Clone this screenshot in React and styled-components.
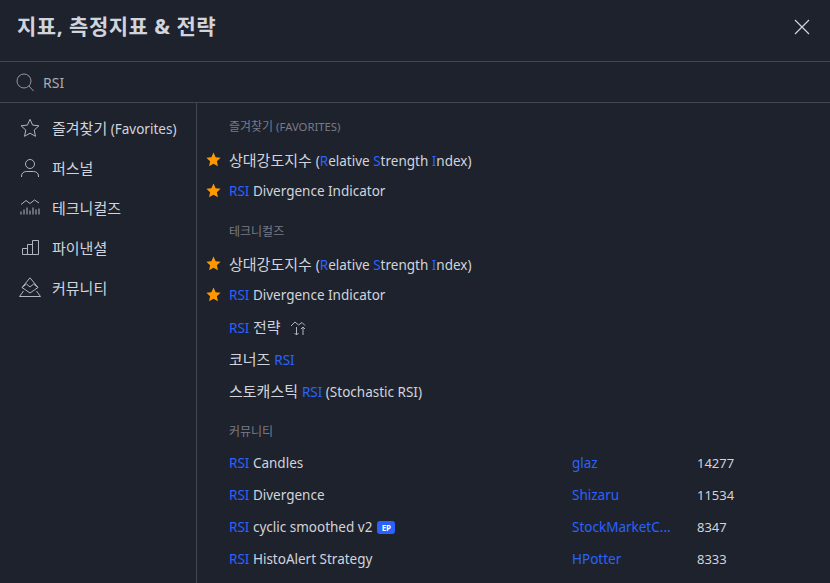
import React from 'react';
import styled, {createGlobalStyle} from 'styled-components';

const GlobalStyle = createGlobalStyle`
  html, body, #root { margin: 0; height: 100%; }
  body {
    background: #1e222d;
    overflow: hidden;
    font-family: "Noto Sans", "Noto Sans CJK KR", sans-serif;
  }
`;

const Dialog = styled.div`
  width: 830px;
  height: 583px;
  display: flex;
  flex-direction: column;
  background: #1e222d;
  color: #d1d4dc;
  overflow: hidden;
`;
const Header = styled.div`
  height: 48px;
  flex: none;
  display: flex;
  align-items: flex-start;
  justify-content: space-between;
  padding: 13px 19px 0 17px;
  border-bottom: 1px solid #434651;
`;
const Title = styled.div`
  font-size: 21px;
  line-height: 26px;
  font-weight: 700;
  letter-spacing: 0.5px;
  color: #d1d4dc;
`;
const CloseButton = styled.button`
  border: 0;
  padding: 0;
  margin-top: 5px;
  background: none;
  display: flex;
  color: #d1d4dc;
`;
const SearchBar = styled.div`
  height: 40px;
  flex: none;
  display: flex;
  align-items: center;
  gap: 9px;
  padding-left: 16px;
  border-bottom: 1px solid #434651;
  color: #9598a1;
`;
const SearchText = styled.span`
  font-size: 14px;
  color: #a8abb3;
`;
const Body = styled.div`
  flex: 1;
  display: flex;
  min-height: 0;
`;
const Sidebar = styled.div`
  width: 196px;
  flex: none;
  border-right: 1px solid #434651;
  padding-top: 5px;
`;
const NavItem = styled.div`
  height: 39.8px;
  display: flex;
  align-items: center;
  padding-left: 19px;
  gap: 11px;
  font-size: 13.5px;
  color: #d1d4dc;
`;
const NavIcon = styled.span`
  width: 22px;
  height: 22px;
  display: flex;
  align-items: center;
  justify-content: center;
  color: #b2b5be;
`;
const NavLabel = styled.span`
  white-space: pre;
`;
const Main = styled.div`
  flex: 1;
  min-width: 0;
  padding-top: 16px;
`;
const SectionTitle = styled.div`
  height: 16px;
  line-height: 16px;
  margin: ${p => p.$top || 0}px 0 ${p => p.$bottom || 9}px 32px;
  font-size: 11.3px;
  color: #787b86;
`;
const SectionKo = styled.span`
  font-size: 12px;
`;
const Row = styled.div`
  height: ${p => p.$tall ? 32 : 31}px;
  display: grid;
  grid-template-columns: 32px 343px 125px 1fr;
  align-items: center;
  font-size: 13.5px;
  color: #d1d4dc;
`;
const StarCell = styled.span`
  display: flex;
  padding-left: 9px;
`;
const Name = styled.span`
  white-space: pre;
`;
// Hangul runs wider than the Latin around it in the reference
const Ko = styled.span`
  font-size: 15px;
`;
const Hit = styled.span`
  color: #2962ff;
`;
const Author = styled.span`
  color: #2962ff;
  white-space: nowrap;
`;
const Count = styled.span`
  color: #d1d4dc;
  font-size: 13px;
`;
const Badge = styled.span`
  display: inline-block;
  vertical-align: 1px;
  margin-left: 5px;
  width: 18px;
  height: 13px;
  border-radius: 3px;
  background: #2962ff;
  color: #fff;
  font-size: 8px;
  font-weight: 700;
  line-height: 13px;
  text-align: center;
`;
const StrategyIcon = styled.svg`
  margin-left: 9px;
  vertical-align: -3px;
  color: #b2b5be;
`;

const StarFilled = () => (
  <svg width="15" height="15" viewBox="0 0 15 15">
    <path d="M7.5.6l2.1 4.6 5 .6-3.7 3.4 1 5-4.4-2.5-4.4 2.5 1-5L.4 5.8l5-.6z" fill="#ff9800"/>
  </svg>
);

const icons = {
  star: (
    <svg width="20" height="20" viewBox="0 0 20 20" fill="none" stroke="currentColor">
      <path d="M10 1.3l2.6 5.8 6.3.7-4.7 4.3 1.3 6.2L10 15.2l-5.5 3.1 1.3-6.2L1.1 7.8l6.3-.7z"/>
    </svg>
  ),
  person: (
    <svg width="18" height="20" viewBox="0 0 18 20" fill="none" stroke="currentColor">
      <circle cx="9" cy="6" r="4.5"/>
      <path d="M.5 19v-1c0-3 2.500-4.500 5-4.500h7c2.500 0 5 1.500 5 4.500v1"/>
    </svg>
  ),
  technicals: (
    <svg width="20" height="16" viewBox="0 0 20 16" fill="none" stroke="currentColor">
      <path d="M1 5.500l5-4 4 3 4.500-3.500 4.500 3"/>
      <path d="M1 15.500v-3M4 15.500v-5M7 15.500v-7M10 15.500v-4M13 15.500v-7M16 15.500v-5M19 15.500v-6"/>
    </svg>
  ),
  financials: (
    <svg width="17" height="15" viewBox="0 0 17 15" fill="none" stroke="currentColor">
      <path d="M.5 14.500v-6h5v6zM5.500 14.500v-10h5v10zM10.500 14.500V.5h6v14z"/>
    </svg>
  ),
  community: (
    <svg width="22" height="20" viewBox="0 0 22 20" fill="none" stroke="currentColor">
      <path d="M.5 19.500h21M.5 19.500l4-5.500M21.500 19.500l-4-5.500"/>
      <path d="M3 10.500L11 .8l8 9.700-8 5.500zM3 10.500l4.500-3.500L11 10l3.500-3 4.500 3.500"/>
    </svg>
  ),
};

const navItems = [
  {icon: 'star', ko: '즐겨찾기', rest: ' (Favorites)'},
  {icon: 'person', ko: '퍼스널'},
  {icon: 'technicals', ko: '테크니컬즈'},
  {icon: 'financials', ko: '파이낸셜'},
  {icon: 'community', ko: '커뮤니티'},
];

const community = [
  {rest: ' Candles', author: 'glaz', count: 14277},
  {rest: ' Divergence', author: 'Shizaru', count: 11534},
  {rest: ' cyclic smoothed v2', author: 'StockMarketC...', count: 8347, badge: true},
  {rest: ' HistoAlert Strategy', author: 'HPotter', count: 8333},
];

const RsiName = () => (
  <Name><Ko>상대강도지수 </Ko>(<Hit>R</Hit>elative <Hit>S</Hit>trength <Hit>I</Hit>ndex)</Name>
);

const FavoriteRows = () => (
  <>
    <Row><StarCell><StarFilled/></StarCell><RsiName/></Row>
    <Row><StarCell><StarFilled/></StarCell><Name><Hit>RSI</Hit> Divergence Indicator</Name></Row>
  </>
);

export default function App() {
  return (
    <Dialog>
      <GlobalStyle/>
      <Header>
        <Title>지표, 측정지표 &amp; 전략</Title>
        <CloseButton>
          <svg width="18" height="18" viewBox="0 0 18 18" stroke="currentColor" strokeWidth="1.2">
            <path d="M2 2l14 14M16 2L2 16"/>
          </svg>
        </CloseButton>
      </Header>
      <SearchBar>
        <svg width="18" height="19" viewBox="0 0 18 19" fill="none" stroke="currentColor">
          <circle cx="8" cy="8" r="7"/>
          <path d="M13 13l4.5 5"/>
        </svg>
        <SearchText>RSI</SearchText>
      </SearchBar>
      <Body>
        <Sidebar>
          {navItems.map(item => (
            <NavItem key={item.icon}>
              <NavIcon>{icons[item.icon]}</NavIcon>
              <NavLabel><Ko>{item.ko}</Ko>{item.rest}</NavLabel>
            </NavItem>
          ))}
        </Sidebar>
        <Main>
          <SectionTitle><SectionKo>즐겨찾기</SectionKo> (FAVORITES)</SectionTitle>
          <FavoriteRows/>
          <SectionTitle $top={18} $bottom={8}><SectionKo>테크니컬즈</SectionKo></SectionTitle>
          <FavoriteRows/>
          <Row $tall><span/>
            <Name><Hit>RSI</Hit> <Ko>전략</Ko>
              <StrategyIcon width="16" height="15" viewBox="0 0 16 15" fill="none" stroke="currentColor">
                <path d="M1 5l4-4 3.500 3L12 1.500 15 4.500M6.500 6v8M4.500 12l2 2 2-2M13 14V6M11 8l2-2 2 2"/>
              </StrategyIcon>
            </Name>
          </Row>
          <Row $tall><span/><Name><Ko>코너즈 </Ko><Hit>RSI</Hit></Name></Row>
          <Row $tall><span/><Name><Ko>스토캐스틱 </Ko><Hit>RSI</Hit> (Stochastic RSI)</Name></Row>
          <SectionTitle $top={18} $bottom={7}><SectionKo>커뮤니티</SectionKo></SectionTitle>
          {community.map(item => (
            <Row $tall key={item.author}>
              <span/>
              <Name><Hit>RSI</Hit>{item.rest}{item.badge && <Badge>EP</Badge>}</Name>
              <Author>{item.author}</Author>
              <Count>{item.count}</Count>
            </Row>
          ))}
        </Main>
      </Body>
    </Dialog>
  );
}
